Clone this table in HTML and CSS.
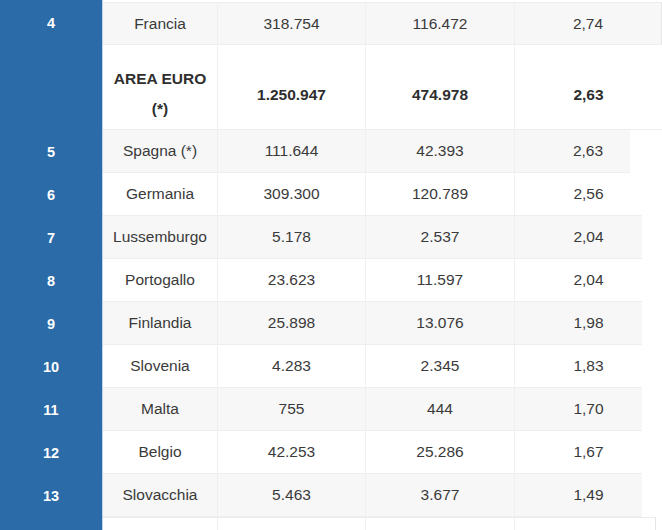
FILE: index.html
```html
<!DOCTYPE html>
<html lang="it">
<head>
<meta charset="utf-8">
<title>Classifica</title>
<link rel="stylesheet" href="styles.css">
</head>
<body>
<div class="table">
  <div class="row gray first w662">
    <div class="rank">4</div><div class="cell">Francia</div><div class="cell">318.754</div><div class="cell">116.472</div><div class="cell last">2,74</div>
  </div>
  <div class="row tall w662">
    <div class="rank"></div><div class="cell bold two">AREA EURO<br>(*)</div><div class="cell bold">1.250.947</div><div class="cell bold">474.978</div><div class="cell bold">2,63</div>
  </div>
  <div class="row gray w630">
    <div class="rank">5</div><div class="cell">Spagna (*)</div><div class="cell">111.644</div><div class="cell">42.393</div><div class="cell">2,63</div>
  </div>
  <div class="row w642">
    <div class="rank">6</div><div class="cell">Germania</div><div class="cell">309.300</div><div class="cell">120.789</div><div class="cell">2,56</div>
  </div>
  <div class="row gray w642">
    <div class="rank">7</div><div class="cell">Lussemburgo</div><div class="cell">5.178</div><div class="cell">2.537</div><div class="cell">2,04</div>
  </div>
  <div class="row w642">
    <div class="rank">8</div><div class="cell">Portogallo</div><div class="cell">23.623</div><div class="cell">11.597</div><div class="cell">2,04</div>
  </div>
  <div class="row gray w642">
    <div class="rank">9</div><div class="cell">Finlandia</div><div class="cell">25.898</div><div class="cell">13.076</div><div class="cell">1,98</div>
  </div>
  <div class="row w642">
    <div class="rank">10</div><div class="cell">Slovenia</div><div class="cell">4.283</div><div class="cell">2.345</div><div class="cell">1,83</div>
  </div>
  <div class="row gray w642">
    <div class="rank">11</div><div class="cell">Malta</div><div class="cell">755</div><div class="cell">444</div><div class="cell">1,70</div>
  </div>
  <div class="row w642">
    <div class="rank">12</div><div class="cell">Belgio</div><div class="cell">42.253</div><div class="cell">25.286</div><div class="cell">1,67</div>
  </div>
  <div class="row gray w642">
    <div class="rank">13</div><div class="cell">Slovacchia</div><div class="cell">5.463</div><div class="cell">3.677</div><div class="cell">1,49</div>
  </div>
  <div class="row w656 tail">
    <div class="rank"></div><div class="cell"></div><div class="cell"></div><div class="cell"></div><div class="cell last"></div>
  </div>
</div>
</body>
</html>
```

FILE: styles.css
```css
html, body {
  margin: 0;
  padding: 0;
  background: #ffffff;
}
body {
  width: 662px;
  height: 530px;
  overflow: hidden;
  font-family: Arial, "Liberation Sans", sans-serif;
  font-size: 15.5px;
  color: #3a3a3a;
}
.table {
  display: flex;
  flex-direction: column;
  width: 662px;
}
.row {
  display: grid;
  grid-template-columns: 103px 115px 148px 149px 1fr;
  height: 43px;
}
.row.first {
  height: 45px;
}
.row.first .cell {
  border-top: 1px solid #ececec;
  margin-top: 2px;
}
.row.tall {
  height: 85px;
}
.row.tail {
  height: 30px;
}
.w662 { width: 662px; }
.w656 { width: 656px; }
.w642 { width: 642px; }
.w630 { width: 630px; }
.rank {
  background: #2a6ba8;
  color: #ffffff;
  font-weight: bold;
  font-size: 14.5px;
  display: flex;
  align-items: center;
  justify-content: center;
  border-right: 1px solid #bcd3ea;
}
.cell {
  display: flex;
  align-items: center;
  justify-content: center;
  text-align: center;
  border-right: 1px solid #f0f0f0;
  border-bottom: 1px solid #eeeeee;
}
.row .cell:last-child {
  border-right: none;
}
.row .cell.last {
  border-right: 1px solid #e6e6e6;
}
.w642 .cell:last-child {
  padding-left: 20px;
}
.w630 .cell:last-child {
  padding-left: 31px;
}
.gray .cell {
  background: #f7f7f7;
}
.bold {
  font-weight: bold;
  color: #2e2e2e;
  padding-top: 16px;
}
.two {
  line-height: 30px;
  padding-top: 14px;
}
.tail .cell {
  border-top: 1px solid #ececec;
  border-bottom: none;
}
```
